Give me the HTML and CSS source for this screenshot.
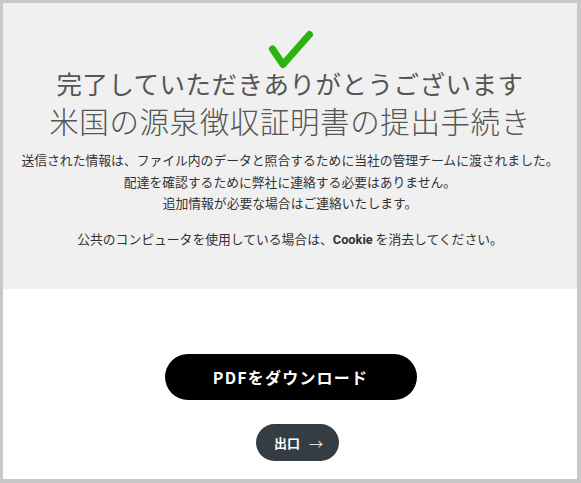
FILE: index.html
```html
<!DOCTYPE html>
<html lang="ja">
<head>
<meta charset="utf-8">
<link rel="stylesheet" href="styles.css">
</head>
<body>
<div class="frame">
  <section class="hero">
    <svg class="check" width="48" height="42" viewBox="0 0 48 42">
      <path d="M4.5 24 L15 39.5 L41.5 9.5" fill="none" stroke="#2db30f" stroke-width="7" stroke-linecap="round" stroke-linejoin="round"/>
    </svg>
    <h1 class="title">完了していただきありがとうございます</h1>
    <h2 class="subtitle">米国の源泉徴収証明書の提出手続き</h2>
    <p class="msg">送信された情報は、ファイル内のデータと照合するために当社の管理チームに渡されました。<br>配達を確認するために弊社に連絡する必要はありません。<br>追加情報が必要な場合はご連絡いたします。</p>
    <p class="msg">公共のコンピュータを使用している場合は、<b>Cookie</b> を消去してください。</p>
  </section>
  <section class="actions">
    <button class="btn-pdf">PDFをダウンロード</button>
    <button class="btn-exit">出口 <span class="arrow">→</span></button>
  </section>
</div>
</body>
</html>
```

FILE: styles.css
```css
html, body {
  margin: 0;
  padding: 0;
}
body {
  font-family: "Noto Sans CJK JP", "Noto Sans", sans-serif;
  background: #fff;
}
.frame {
  box-sizing: border-box;
  width: 581px;
  height: 483px;
  border-style: solid;
  border-color: #c8c8c8;
  border-width: 3px 4px 4px 3px;
  display: flex;
  flex-direction: column;
}
.hero {
  background: #f0f0f0;
  height: 286px;
  display: flex;
  flex-direction: column;
  align-items: center;
  padding-top: 22px;
  box-sizing: border-box;
}
.check {
  display: block;
  margin-left: 3px;
  overflow: visible;
}
.title {
  margin: 0;
  font-size: 25.5px;
  line-height: 32px;
  font-weight: 400;
  color: #555;
  letter-spacing: 0.5px;
}
.subtitle {
  margin: 0;
  font-size: 29.5px;
  line-height: 42px;
  font-weight: 300;
  color: #555;
  letter-spacing: 0.6px;
}
.msg {
  margin: 8px 0 0;
  font-size: 12.8px;
  line-height: 21.5px;
  color: #333;
  text-align: center;
}
.msg + .msg {
  margin-top: 14px;
}
.msg b {
  font-weight: 700;
  font-family: "Roboto", "Noto Sans CJK JP", sans-serif;
}
.actions {
  flex: 1;
  display: flex;
  flex-direction: column;
  align-items: center;
  padding-top: 65px;
}
button {
  font-family: "Noto Sans CJK JP", "Noto Sans", sans-serif;
  border: none;
  cursor: pointer;
}
.btn-pdf {
  width: 252px;
  height: 46px;
  border-radius: 23px;
  background: #000;
  color: #fff;
  font-size: 16px;
  font-weight: 700;
  letter-spacing: 1.2px;
  margin-left: 1px;
}
.btn-exit {
  margin-top: 24px;
  width: 83px;
  height: 37px;
  border-radius: 19px;
  background: #353d44;
  color: #fff;
  font-size: 13px;
  font-weight: 700;
  display: flex;
  align-items: center;
  justify-content: center;
  gap: 9px;
  padding: 0 0 0 2px;
  margin-left: 15px;
}
.arrow {
  font-weight: 300;
  font-size: 14px;
}
```
